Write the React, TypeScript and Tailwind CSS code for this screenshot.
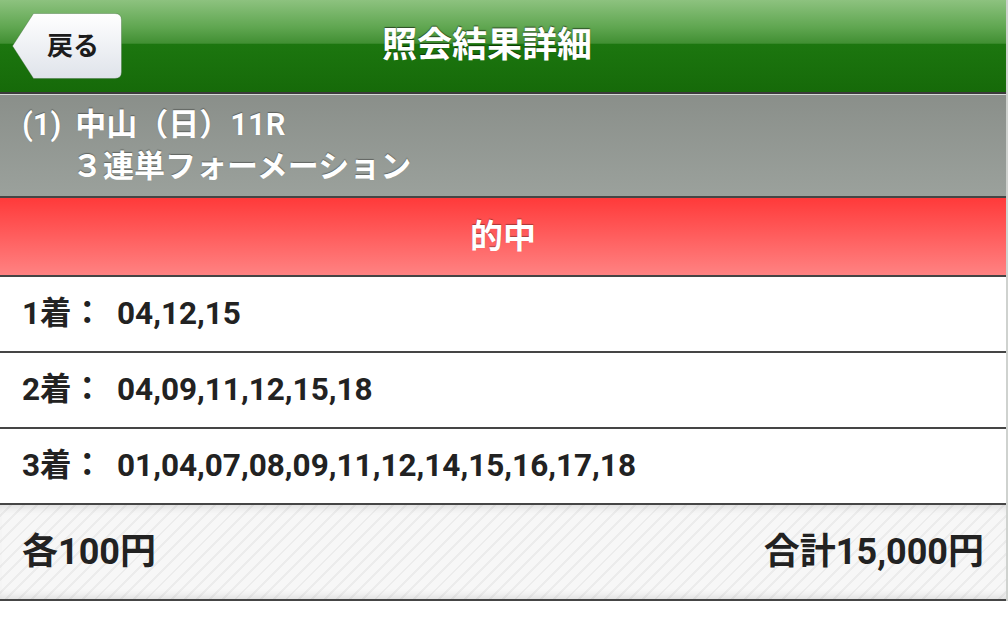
import React from 'react';

const font = "font-['Roboto','Noto_Sans_CJK_JP',sans-serif]";

const rows = [
  { label: '1着：', value: '04,12,15' },
  { label: '2着：', value: '04,09,11,12,15,18' },
  { label: '3着：', value: '01,04,07,08,09,11,12,14,15,16,17,18' },
];

function BackButton() {
  return (
    <button
      type="button"
      className="relative flex h-[66px] w-[110px] items-center justify-center pl-[12px]"
    >
      <svg className="absolute inset-0" width="110" height="66" viewBox="0 0 110 66" aria-hidden>
        <defs>
          <linearGradient id="backFill" x1="0" y1="0" x2="0" y2="1">
            <stop offset="0" stopColor="#ffffff" />
            <stop offset="1" stopColor="#dfe3ea" />
          </linearGradient>
        </defs>
        <path
          d="M0.5 33 L21.5 0.5 H103 Q109.5 0.5 109.5 7 V59 Q109.5 65.5 103 65.5 H21.5 Z"
          fill="url(#backFill)"
          stroke="#2f5e27"
          strokeOpacity="0.35"
        />
      </svg>
      <span className="relative text-[26px] font-bold text-[#1c1c1c]">戻る</span>
    </button>
  );
}

export default function App() {
  return (
    <div className={`${font} min-h-[621px] w-[1008px] bg-white`}>
      <div className="border-r-2 border-[#cfd2cf]">
        {/* header */}
        <header className="flex h-[94px] items-center border-b-2 border-[#3b3b3b] bg-[linear-gradient(to_bottom,#8dc27f_0%,#5fa650_30%,#418f33_47%,#1c760f_48%,#166a09_100%)] pl-[12px]">
          <BackButton />
          <h1 className="flex-1 pr-[154px] text-center text-[35px] font-bold text-white [text-shadow:0_-1px_1px_rgba(0,0,0,0.55)]">
            照会結果詳細
          </h1>
        </header>

        {/* race info */}
        <section className="flex h-[104px] flex-col justify-center border-t border-b-2 border-t-[#d6d9d6] border-b-[#454545] bg-[linear-gradient(to_bottom,#8a8f8a,#9ba19c)] pl-[22px] text-[31px] font-semibold leading-[42px] text-white [text-shadow:0_-1px_1px_rgba(0,0,0,0.35)]">
          <div>
            (1)<span className="ml-[14px]">中山（日）11R</span>
          </div>
          <div className="pl-[50px]">３連単フォーメーション</div>
        </section>

        {/* verdict */}
        <div className="flex h-[79px] items-center justify-center border-b-2 border-[#454545] bg-[linear-gradient(to_bottom,#ff3a3a,#ff8282)] text-[33px] font-bold text-white [text-shadow:0_-1px_1px_rgba(0,0,0,0.35)]">
          的中
        </div>

        {/* placings */}
        {rows.map((r) => (
          <div
            key={r.label}
            className="flex h-[76px] items-center border-b-2 border-[#454545] pl-[22px] text-[31.5px] font-bold text-[#222]"
          >
            <span className="w-[95px]">{r.label}</span>
            <span>{r.value}</span>
          </div>
        ))}

        {/* total */}
        <div className="flex h-[96px] items-center justify-between border-b-2 border-[#454545] bg-[repeating-linear-gradient(135deg,#f7f7f7_0px,#f7f7f7_7px,#ececec_7px,#ececec_9px)] px-[22px] text-[36px] font-bold text-[#222] shadow-[inset_0_8px_8px_-6px_rgba(0,0,0,0.12),inset_0_-8px_8px_-6px_rgba(0,0,0,0.12)]">
          <span>各100円</span>
          <span>合計15,000円</span>
        </div>
      </div>
    </div>
  );
}
